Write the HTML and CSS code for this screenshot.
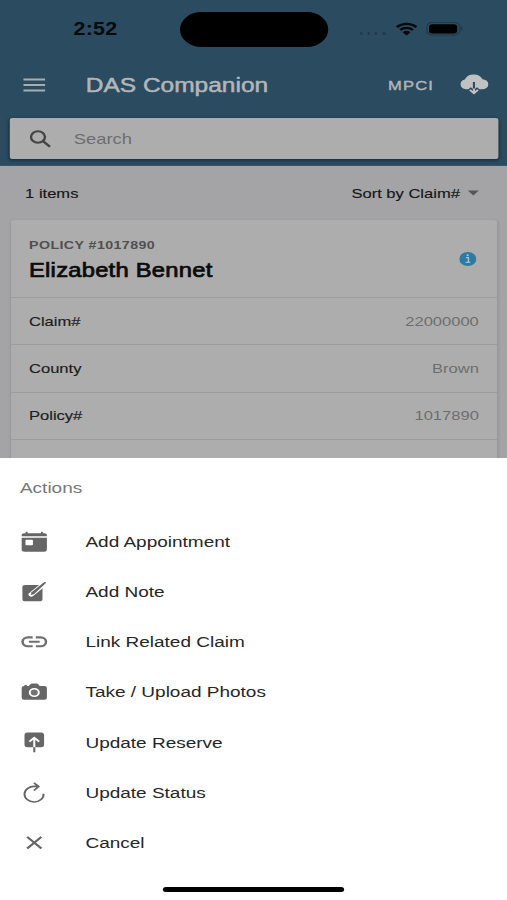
FILE: index.html
```html
<!DOCTYPE html>
<html lang="en">

<head>
    <meta charset="UTF-8">
    <meta name="viewport" content="width=device-width, initial-scale=1.0">
    <title>DAS Companion</title>
    <link rel="stylesheet" href="styles.css">
</head>

<body>
    <div class="screen">
        <header class="header">
            <div class="status-bar">
                <span class="time">2:52</span>
                <div class="island"></div>
                <div class="status-icons">
                    <div class="dots"><i></i><i></i><i></i><i></i></div>
                    <svg class="wifi" width="18" height="14" viewBox="0 0 18 14">
                        <path d="M1 5.1a11.5 11.5 0 0 1 16 0M3.8 8a7.5 7.5 0 0 1 10.4 0" fill="none" stroke="#050a0d" stroke-width="2.3"/>
                        <path d="M5.8 10.3a4.8 4.8 0 0 1 6.4 0L9 13.6z" fill="#050a0d"/>
                    </svg>
                    <svg class="battery" width="31" height="14" viewBox="0 0 31 14">
                        <rect x=".6" y=".6" width="26.8" height="12.3" rx="4" fill="none" stroke="#1f3949" stroke-width="1"/>
                        <rect x="2.3" y="2.2" width="23" height="9.3" rx="2.7" fill="#000"/>
                        <path d="M28.8 4.8q1.6 2 0 4z" fill="#172c39"/>
                    </svg>
                </div>
            </div>

            <div class="toolbar">
                <svg class="menu-icon" width="18" height="14" viewBox="0 0 18 14">
                    <path d="M0 1.5h18M0 7h18M0 12.5h18" stroke="#a5adb2" stroke-width="2.2"/>
                </svg>
                <h1>DAS Companion</h1>
                <span class="program">MPCI</span>
                <svg class="cloud-icon" width="24" height="22" viewBox="0 0 24 22">
                    <path d="M5.4 16.2A5 5 0 0 1 4.5 6.5 7.8 7.8 0 0 1 19 6.2a5 5 0 0 1-.4 10z" fill="#bfc1c2"/>
                    <path d="M12 9v7" stroke="#2a4b60" stroke-width="1.7"/>
                    <path d="M8.4 15.4l3.6 3.5 3.6-3.5" fill="none" stroke="#2a4b60" stroke-width="3"/>
                    <path d="M12 15.5v4.5M8.7 16.9l3.3 3.3 3.3-3.3" fill="none" stroke="#bfc1c2" stroke-width="1.7"/>
                </svg>
            </div>

            <div class="search">
                <svg width="18" height="18" viewBox="0 0 18 18">
                    <circle cx="7" cy="7" r="5.7" fill="none" stroke="#444" stroke-width="2"/>
                    <path d="M11 11l5.8 5.8" stroke="#444" stroke-width="2.3"/>
                </svg>
                <span>Search</span>
            </div>
        </header>

        <main>
            <div class="list-header">
                <span class="count">1 items</span>
                <span class="sort">Sort by Claim#</span>
                <svg width="9" height="6" viewBox="0 0 9 6"><path d="M0 .5h9L4.5 5.5z" fill="#555"/></svg>
            </div>

            <div class="card">
                <div class="card-header">
                    <div>
                        <p class="policy">POLICY #1017890</p>
                        <h2>Elizabeth Bennet</h2>
                    </div>
                    <svg width="14" height="14" viewBox="0 0 14 14">
                        <circle cx="7" cy="7" r="7" fill="#2b7ba5"/>
                        <path d="M5.4 5.6h2.1v4.8M5.1 10.4h3.9" fill="none" stroke="#a9bdc7" stroke-width="1.2"/>
                        <circle cx="6.9" cy="3.2" r=".95" fill="#a9bdc7"/>
                    </svg>
                </div>
                <div class="row"><span>Claim#</span><span class="value">22000000</span></div>
                <div class="row"><span>County</span><span class="value">Brown</span></div>
                <div class="row"><span>Policy#</span><span class="value">1017890</span></div>
                <div class="row"></div>
            </div>
        </main>

        <div class="action-sheet">
            <div class="sheet-title">Actions</div>
            <div class="action">
                <svg width="22" height="22" viewBox="0 0 22 22" fill="#666">
                    <path d="M.7 5.2V4.4Q.7 2.2 2.9 2.2H4V.8h1.5v1.4h11V.8H18v1.4h1.1q2.2 0 2.2 2.2v.8z"/>
                    <path fill-rule="evenodd" d="M.7 6.7h20.6v11.5q0 2.5-2.5 2.5H3.2Q.7 20.7 .7 18.2zM4.5 8.8q-.7 0-.7.7v4q0 .7.7.7h4.7q.7 0 .7-.7v-4q0-.7-.7-.7z"/>
                </svg>
                <span>Add Appointment</span>
            </div>
            <div class="action">
                <svg width="22" height="22" viewBox="0 0 22 22">
                    <rect x="1.3" y="4" width="16.4" height="16.3" rx="2.3" fill="#666"/>
                    <path d="M8.5 13.5L20 2" stroke="#fff" stroke-width="4.4" stroke-linecap="round"/>
                    <path d="M8 14l.8-2.8L19 1.2q1.4-.8 1.7.5L10.7 13.2z" fill="#666"/>
                </svg>
                <span>Add Note</span>
            </div>
            <div class="action">
                <svg width="22" height="22" viewBox="0 0 22 22">
                    <path d="M9.7 6.4H5.8a4.4 4.4 0 0 0 0 8.8h3.9M12.3 6.4h3.9a4.4 4.4 0 0 1 0 8.8h-3.9M6.6 10.8h8.8" fill="none" stroke="#707070" stroke-width="2.1"/>
                </svg>
                <span>Link Related Claim</span>
            </div>
            <div class="action">
                <svg width="22" height="22" viewBox="0 0 22 22">
                    <path d="M2.7 5H6.5l1.3-1.7q.5-.7 1.3-.7h3.8q.8 0 1.3.7L15.5 5h3.8q2 0 2 2v9.5q0 2.2-2 2.2H2.7q-2 0-2-2.2V7q0-2 2-2z" fill="#666"/>
                    <circle cx="11" cy="11.5" r="3.7" fill="#747474" stroke="#fff" stroke-width="1.6"/>
                    <path d="M3 3.9h2v1.5H3z" fill="#666"/>
                </svg>
                <span>Take / Upload Photos</span>
            </div>
            <div class="action">
                <svg width="22" height="22" viewBox="0 0 22 22">
                    <rect x="3" y=".4" width="16" height="14.9" rx="2.5" fill="#666"/>
                    <path d="M11 5.6v10M7 9.7l4-4 4 4" fill="none" stroke="#fff" stroke-width="1.7"/>
                    <path d="M11 15.3v5" stroke="#666" stroke-width="1.7"/>
                </svg>
                <span>Update Reserve</span>
            </div>
            <div class="action">
                <svg width="22" height="22" viewBox="0 0 22 22" fill="none" stroke="#666" stroke-width="1.6">
                    <path d="M14.2 4.4H11.500A7.800 7.800 0 1 0 18.600 11.800M10.700.8l3.900 3.700-3.900 4"/>
                </svg>
                <span>Update Status</span>
            </div>
            <div class="action">
                <svg width="22" height="22" viewBox="0 0 22 22">
                    <path d="M5.2 4.9l11.6 11.6M16.8 4.9L5.2 16.5" stroke="#666" stroke-width="2"/>
                </svg>
                <span>Cancel</span>
            </div>
            <div class="home-indicator"></div>
        </div>
    </div>
</body>

</html>
```
FILE: styles.css
```css
* {
    margin: 0;
    padding: 0;
    box-sizing: border-box;
}

body {
    width: 507px;
    height: 900px;
    overflow: hidden;
    background-color: #fff;
    font-family: "Liberation Sans", Arial, sans-serif;
}

/* 414px phone layout, widened to fill the window */
.screen {
    position: relative;
    width: 414px;
    height: 900px;
    overflow: hidden;
    background-color: #a4a4a7;
    transform: scaleX(1.22464);
    transform-origin: 0 0;
}

svg {
    display: block;
    flex: none;
}

.header {
    height: 166px;
    background-color: #2a4b60;
    border-bottom: 1px solid #3b5362;
}

.status-bar {
    display: flex;
    align-items: center;
    justify-content: space-between;
    height: 58px;
    padding: 0 35.5px 0 60px;
}

.time {
    padding-top: 1px;
    font-size: 17.5px;
    font-weight: bold;
    letter-spacing: 0.2px;
    color: #050a0d;
}

.island {
    position: absolute;
    top: 12px;
    left: 147px;
    width: 121px;
    height: 35px;
    border-radius: 18px;
    background-color: #000;
}

.status-icons {
    display: flex;
    align-items: center;
}

.dots {
    display: flex;
    gap: 3.6px;
    margin: 8px 8px 0 0;
}

.dots i {
    width: 2.5px;
    height: 3px;
    border-radius: 50%;
    background-color: #1f3b4c;
}

.wifi {
    margin-right: 7px;
}

.toolbar {
    display: flex;
    align-items: center;
    height: 54px;
    padding: 0 15.5px 0 19px;
}

.cloud-icon {
    margin-top: -2px;
}

h1 {
    flex: 1;
    margin-left: 33px;
    font-size: 20px;
    font-weight: normal;
    color: #b3b6b8;
    -webkit-text-stroke: 0.5px #b3b6b8;
}

.program {
    margin-right: 20px;
    font-size: 13.5px;
    letter-spacing: 1px;
    color: #b3b6b8;
    -webkit-text-stroke: 0.4px #b3b6b8;
}

.search {
    display: flex;
    align-items: center;
    height: 41px;
    margin: 6px 7px 0 7.7px;
    padding-left: 16.5px;
    border-radius: 2px;
    background-color: #adadad;
    box-shadow: 0 1px 3px rgba(0, 0, 0, 0.5);
}

.search span {
    margin-left: 18px;
    font-size: 15px;
    color: #6d6d6d;
}

.list-header {
    display: flex;
    align-items: center;
    height: 54px;
    padding: 0 23.5px 0 20.5px;
    font-size: 13.5px;
    color: #161616;
    -webkit-text-stroke: 0.15px #161616;
}

.count {
    flex: 1;
}

.sort {
    margin-right: 6px;
}

.card {
    margin: 0 8px 0 8.5px;
    border-radius: 3px;
    background-color: #adadad;
    box-shadow: 0 1px 3px rgba(0, 0, 0, 0.15);
}

.card-header {
    display: flex;
    align-items: center;
    justify-content: space-between;
    height: 77px;
    padding: 0 17px 0 15.2px;
}

.policy {
    margin-top: 2px;
    font-size: 11.6px;
    font-weight: bold;
    line-height: 16px;
    letter-spacing: 0.35px;
    color: #505050;
}

h2 {
    margin-top: 5px;
    font-size: 19.4px;
    font-weight: normal;
    line-height: 25px;
    letter-spacing: 0.2px;
    color: #0b0b0b;
    -webkit-text-stroke: 0.7px #0b0b0b;
}

.row {
    display: flex;
    align-items: center;
    justify-content: space-between;
    height: 47.3px;
    padding: 0 15px 0 15.2px;
    border-top: 1px solid #9c9c9c;
    font-size: 13.5px;
    color: #1c1c1c;
    -webkit-text-stroke: 0.15px #1c1c1c;
}

.value {
    color: #6d6d6d;
    -webkit-text-stroke: 0;
}

.action-sheet {
    position: absolute;
    bottom: 0;
    left: 0;
    width: 100%;
    height: 442px;
    background-color: #fff;
}

.sheet-title {
    padding-left: 16.3px;
    font-size: 15.5px;
    line-height: 59px;
    color: #777;
}

.action {
    display: flex;
    align-items: center;
    height: 50.15px;
    padding-left: 16.6px;
    font-size: 15.5px;
    color: #262626;
}

.action span {
    margin-left: 31.2px;
}

.home-indicator {
    position: absolute;
    bottom: 8px;
    left: 133px;
    width: 148px;
    height: 5px;
    border-radius: 3px;
    background-color: #000;
}
```
